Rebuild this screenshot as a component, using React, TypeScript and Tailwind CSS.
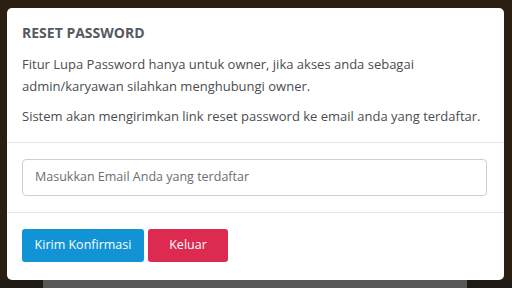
export default function App() {
  const font = { fontFamily: '"Open Sans", "Noto Sans", sans-serif' };
  return (
    <div className="relative w-[512px] h-[288px] overflow-hidden bg-[#2a1f10]" style={font}>
      <div className="absolute left-0 right-0 bottom-0 h-[8px] bg-[#1e1a16]">
        <div className="ml-[43px] w-[424px] h-full bg-[#58585b]" />
      </div>
      <div className="absolute left-[7px] top-[8px] w-[497px] h-[272px] bg-white rounded-[5px] flex flex-col">
        <div className="pl-[15px] pr-[15px] pt-[15px] pb-[15px] border-b border-[#e6e6e6]">
          <div className="text-[14px] leading-[20px] font-bold text-[#555a62]">RESET PASSWORD</div>
          <p className="mt-[10px] text-[13px] leading-[22px] text-[#4a4d52]">
            Fitur Lupa Password hanya untuk owner, jika akses anda sebagai admin/karyawan silahkan menghubungi owner.
          </p>
          <p className="mt-[8px] text-[13px] leading-[22px] text-[#4a4d52]">
            Sistem akan mengirimkan link reset password ke email anda yang terdaftar.
          </p>
        </div>
        <div className="pl-[15px] pr-[17px] pt-[16px] pb-[16px] border-b border-[#e6e6e6]">
          <div className="h-[37px] w-full rounded-[4px] border border-[#cfcfcf] flex items-center pl-[12px] text-[12.5px] text-[#6b6e73]">
            Masukkan Email Anda yang terdaftar
          </div>
        </div>
        <div className="pl-[15px] pt-[16px] flex gap-[4px]">
          <div className="h-[33px] w-[122px] rounded-[3px] bg-[#1193d6] text-white text-[12.5px] flex items-center justify-center">
            Kirim Konfirmasi
          </div>
          <div className="h-[33px] w-[80px] rounded-[3px] bg-[#dc2a50] text-white text-[12.5px] flex items-center justify-center">
            Keluar
          </div>
        </div>
      </div>
    </div>
  );
}
